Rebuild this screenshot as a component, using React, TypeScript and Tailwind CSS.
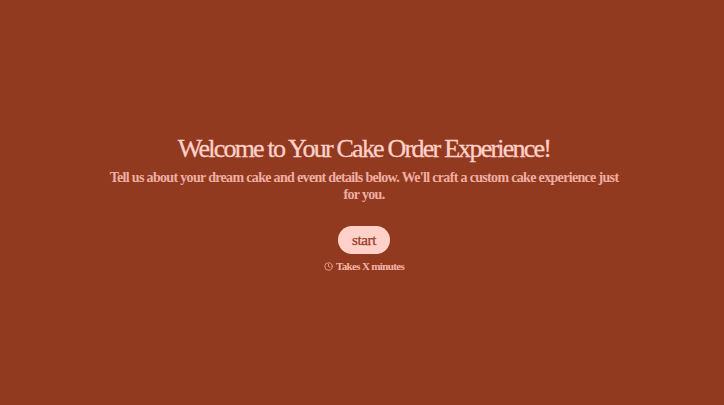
import { Clock } from 'lucide-react';

export default function App() {
  return (
    <div className="flex h-[405px] w-full flex-col items-center justify-center bg-[#923a20] pl-[4px] text-center font-['Liberation_Serif',serif]">
      <div className="flex w-[520px] flex-col items-center pt-[2px]">
        <h1 className="text-[26px] leading-[30px] font-normal tracking-[-1.77px] text-[#ffd1c9] [-webkit-text-stroke:0.3px_#ffd1c9]">
          Welcome to Your Cake Order Experience!
        </h1>
        <p className="mt-[5px] text-[14px] leading-[17px] font-bold tracking-[-0.67px] text-[#efaea2]">
          Tell us about your dream cake and event details below. We'll craft a custom cake experience just for you.
        </p>
        <button className="mt-[23px] h-[28px] w-[52px] rounded-full bg-[#ffd1c9] text-[15px] font-normal tracking-[-0.4px] text-[#923a20] [-webkit-text-stroke:0.25px_#923a20]">
          start
        </button>
        <div className="mt-[5px] flex items-center gap-[3px] text-[11px] leading-[14px] font-bold tracking-[-0.65px] text-[#f5b5a9]">
          <Clock className="h-[9px] w-[9px]" />
          <span>Takes X minutes</span>
        </div>
      </div>
    </div>
  );
}
